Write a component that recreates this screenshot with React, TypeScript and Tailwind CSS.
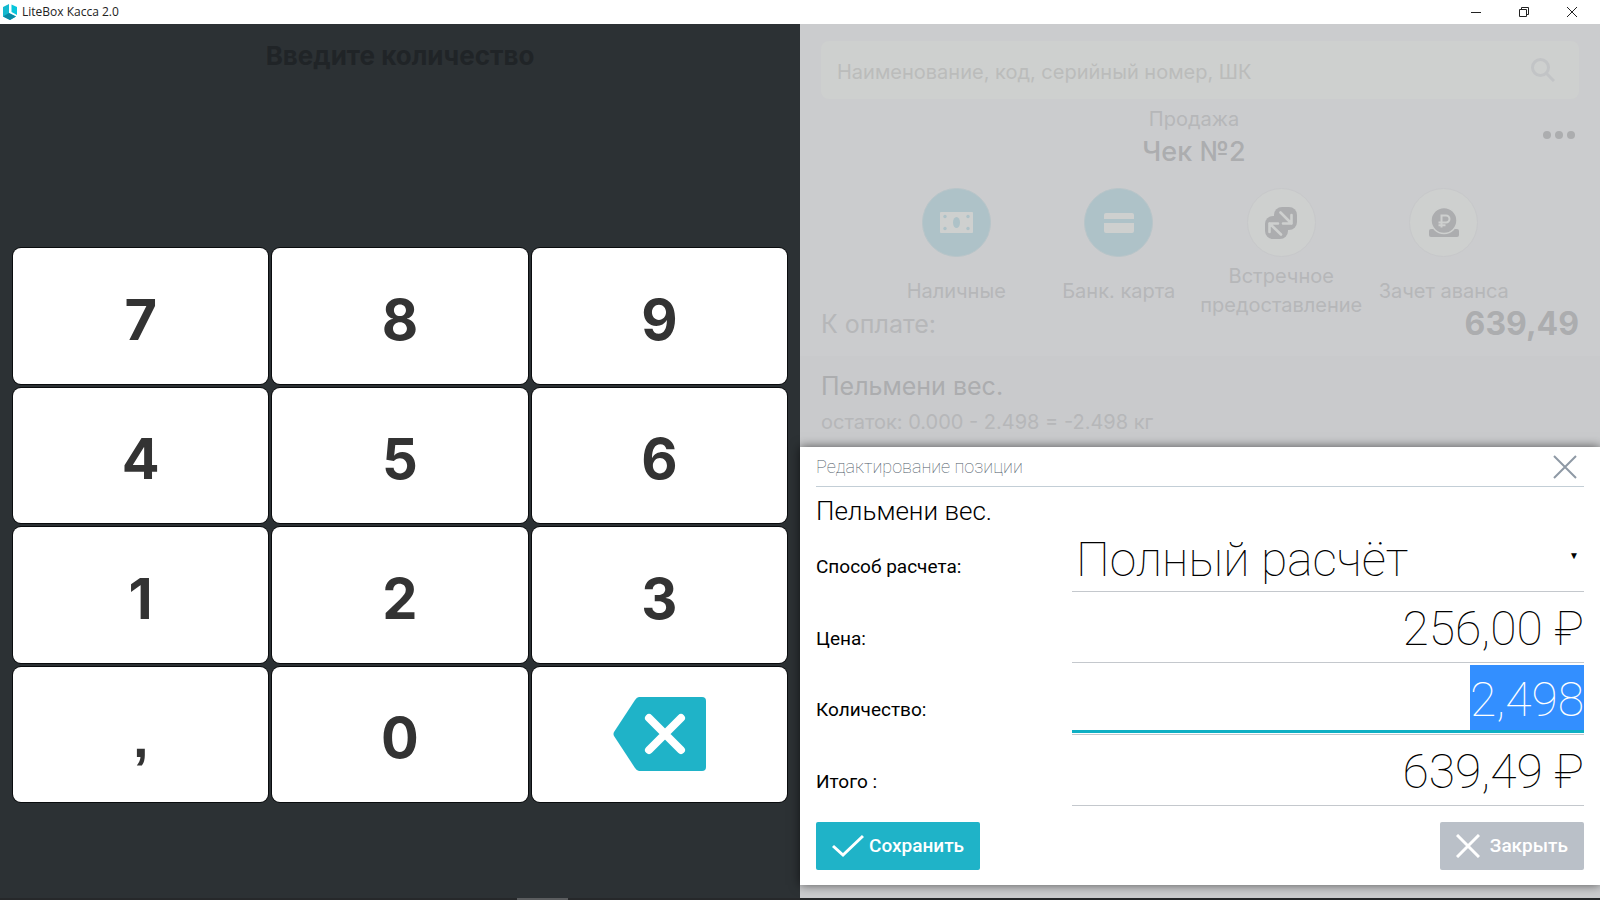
import { useState } from "react";

const keys = ["7", "8", "9", "4", "5", "6", "1", "2", "3", ",", "0", "del"];

const TitleBar = () => {
  return (
    <header className="flex h-6 shrink-0 items-center justify-between bg-white pl-[2px] font-['Open_Sans',sans-serif] text-[#222]">
      <div className="flex items-center gap-1">
        <svg className="h-[18px] w-4" viewBox="0 0 16 18">
          <path d="M1 4l6-3v9l7 3.500L8 17l-7-3.500z" fill="#14b9cf" />
          <path d="M1 13.500l6-3.500 7 3.500L8 17z" fill="#0b8aa5" />
          <path d="M9.500 1.500L15 4v8l-5.500-3z" fill="#08c6dc" />
        </svg>
        <span className="text-xs">LiteBox Касса 2.0</span>
      </div>
      <div className="flex h-full pr-1">
        <button aria-label="Свернуть" className="flex w-12 items-center justify-center">
          <svg className="h-3 w-3" viewBox="0 0 12 12" fill="none" stroke="currentColor"><path d="M1 6.500h10" /></svg>
        </button>
        <button aria-label="Развернуть" className="flex w-12 items-center justify-center">
          <svg className="h-3 w-3" viewBox="0 0 12 12" fill="none" stroke="currentColor"><path d="M1.500 3.500h7v7h-7zM3.500 3.500v-2h7v7h-2" /></svg>
        </button>
        <button aria-label="Закрыть окно" className="flex w-12 items-center justify-center">
          <svg className="h-3 w-3" viewBox="0 0 12 12" fill="none" stroke="currentColor"><path d="M1 1l10 10M11 1L1 11" /></svg>
        </button>
      </div>
    </header>
  );
};

const KeyFace = ({ value }: { value: string }) => {
  if (value === "del") {
    return (
      <svg className="mb-2 ml-[2px] h-[74px] w-[94px]" viewBox="0 0 94 74">
        <path d="M26 0h63q4 0 4 4v66q0 4-4 4H26q-2 0-4-3L1 39q-1-2 0-4L22 3q2-3 4-3z" fill="#1fb3c8" />
        <path d="M36 21l32 32M68 21L36 53" stroke="#fff" strokeWidth="8" strokeLinecap="round" />
      </svg>
    );
  }
  if (value === ",") {
    return <span className="font-['Liberation_Sans',sans-serif]">,</span>;
  }
  return <span>{value}</span>;
};

const Keypad = ({ onKey }: { onKey: (key: string) => void }) => {
  return (
    <section className="flex flex-col bg-[#2c3134] px-[13px] pb-24">
      <h1 className="pt-3 text-center text-[26px] leading-10 font-bold text-[#202427]">Введите количество</h1>
      <div className="mt-[172px] grid flex-1 grid-cols-3 grid-rows-4 gap-1">
        {keys.map((key) => (
          <button
            key={key}
            aria-label={key === "del" ? "Удалить" : key}
            onClick={() => onKey(key)}
            className="flex items-center justify-center rounded-lg bg-white pt-2 text-[56px] leading-none font-bold text-[#333] shadow-[0_0_0_1px_#0a0c0e] cursor-pointer"
          >
            <KeyFace value={key} />
          </button>
        ))}
      </div>
    </section>
  );
};

const CashIcon = () => (
  <svg className="h-[21px] w-[33px]" viewBox="0 0 33 21">
    <rect width="33" height="21" rx="1" fill="#ced0cf" />
    <g fill="#aec2c8">
      <ellipse cx="16.5" cy="10.5" rx="3.5" ry="5.5" />
      <circle cx="5" cy="4.5" r="1.7" />
      <circle cx="28" cy="4.5" r="1.7" />
      <circle cx="5" cy="16.5" r="1.7" />
      <circle cx="28" cy="16.5" r="1.7" />
    </g>
  </svg>
);

const CardIcon = () => (
  <svg className="h-[20px] w-[30px]" viewBox="0 0 30 20" fill="#ced0cf">
    <path d="M2 0h26q2 0 2 2v4H0V2q0-2 2-2zM0 10h30v8q0 2-2 2H2q-2 0-2-2z" />
  </svg>
);

const SwapIcon = () => (
  <svg className="h-8 w-8" viewBox="0 0 32 32">
    <rect x="9" y="0" width="23" height="23" rx="8" fill="#acadaf" />
    <rect x="0" y="9" width="23" height="23" rx="8" fill="#acadaf" />
    <path
      d="M15.500 5.500l11 11M26.500 8v8.500H18M16 27.500l-11.500-11M4.500 25v-8.500H13"
      fill="none"
      stroke="#ced0cf"
      strokeWidth="2.600"
      strokeLinecap="round"
      strokeLinejoin="round"
    />
  </svg>
);

const AdvanceIcon = () => (
  <svg className="h-[29px] w-[30px]" viewBox="0 0 30 29">
    <rect y="21" width="30" height="8" rx="2" fill="#acadaf" />
    <circle cx="15" cy="12.5" r="13" fill="#acadaf" stroke="#ced0cf" strokeWidth="1.5" />
    <path d="M12.500 19.500V7.500h4.500a3.500 3.500 0 0 1 0 7H9.500M9.500 17.200h7" fill="none" stroke="#ced0cf" strokeWidth="2" />
  </svg>
);

const payments = [
  { label: "Наличные", icon: <CashIcon />, filled: true },
  { label: "Банк. карта", icon: <CardIcon />, filled: true },
  { label: "Встречное предоставление", icon: <SwapIcon />, filled: false },
  { label: "Зачет аванса", icon: <AdvanceIcon />, filled: false },
];

const Receipt = () => {
  return (
    <div className="flex flex-col text-[#b6b7b9]">
      <div className="px-[21px] pt-[17px]">
        <div className="flex h-[58px] items-center rounded-lg bg-[#ced0cf] pr-6 pl-4">
          <input
            aria-label="Поиск товара"
            placeholder="Наименование, код, серийный номер, ШК"
            className="min-w-0 flex-1 bg-transparent pt-1 text-xl placeholder:text-[#bbbcbb] outline-none"
          />
          <svg className="h-6 w-6" viewBox="0 0 24 24" fill="none" stroke="#c2c4c6" strokeWidth="3">
            <circle cx="9.5" cy="9.5" r="8" />
            <path d="M15 15l8 8" />
          </svg>
        </div>
        <div className="relative pt-1 pr-3 text-center">
          <p className="text-xl leading-8">Продажа</p>
          <h2 className="text-[27px] leading-[33px] font-medium text-[#acadaf]">Чек №2</h2>
          <button aria-label="Ещё" className="absolute top-7 right-1 flex gap-1 py-1">
            <span className="size-2 rounded-full bg-[#acadaf]" />
            <span className="size-2 rounded-full bg-[#acadaf]" />
            <span className="size-2 rounded-full bg-[#acadaf]" />
          </button>
        </div>
        <div className="mx-[54px] mt-5 grid grid-cols-4">
          {payments.map((item) => (
            <button key={item.label} className="flex flex-col items-center">
              <span
                className={
                  item.filled
                    ? "flex size-[69px] items-center justify-center rounded-full border border-[#b8c5c9] bg-[#aec2c8]"
                    : "flex size-[69px] items-center justify-center rounded-full border border-[#c7c8ca] bg-[#ced0cf]"
                }
              >
                {item.icon}
              </span>
              <span className="mt-[5px] flex h-[58px] items-center text-xl leading-[29px]">{item.label}</span>
            </button>
          ))}
        </div>
        <div className="-mt-3 flex items-center justify-between">
          <span className="text-[25px] leading-8">К оплате:</span>
          <span className="text-[32px] leading-8 font-bold text-[#acadaf]">639,49</span>
        </div>
      </div>
      <div className="mt-4 flex-1 bg-[#c9cacc] px-[21px] pt-[10px] pb-3">
        <p className="text-[25px] leading-10 text-[#acadaf]">Пельмени вес.</p>
        <p className="text-xl leading-8">остаток: 0.000 - 2.498 = -2.498 кг</p>
      </div>
    </div>
  );
};

const rowClass = "grid h-[71px] grid-cols-[1fr_2fr] items-end text-[19px]";
const fieldClass =
  "h-[68px] w-full min-w-0 border-b border-[#c4c8cd] bg-transparent text-right text-5xl font-thin text-black outline-none";

const App = () => {
  const [quantity, setQuantity] = useState("2,498");

  const handleKey = (key: string) => {
    if (key === "del") {
      setQuantity(quantity.slice(0, -1));
    } else {
      setQuantity(quantity + key);
    }
  };

  return (
    <div className="flex h-screen flex-col overflow-hidden bg-[#cbccce] font-['Inter',sans-serif]">
      <TitleBar />
      <main className="grid min-h-0 flex-1 grid-cols-2">
        <Keypad onKey={handleKey} />

        <div className="flex min-h-0 flex-col">
          <div className="min-h-0 flex-1 overflow-hidden">
            <Receipt />
          </div>

          {/* position editor */}
          <form
            onSubmit={(e) => e.preventDefault()}
            className="relative mb-[13px] bg-white px-4 pb-[15px] font-['Roboto',sans-serif] text-black shadow-[0_0_10px_rgba(0,0,0,0.6)]"
          >
            <div className="flex h-10 items-center justify-between border-b border-[#c3ced6] pt-px">
              <h2 className="text-lg font-thin text-[#4d5866]">Редактирование позиции</h2>
              <button type="button" aria-label="Закрыть редактирование" className="pr-[7px]">
                <svg className="h-6 w-6" viewBox="0 0 24 24" stroke="#8e99a5" strokeWidth="2">
                  <path d="M1 1l22 22M23 1L1 23" />
                </svg>
              </button>
            </div>
            <h3 className="h-[41px] pt-1 text-[26px] leading-10 font-light">Пельмени вес.</h3>

            <div className="grid grid-cols-[1fr_2fr] text-[19px]">
              <label htmlFor="method" className="flex items-center pt-[14px]">Способ расчета:</label>
              <div className="relative h-16">
                <select id="method" className="h-full w-full appearance-none border-b border-[#c4c8cd] bg-transparent pl-1 text-5xl font-thin outline-none">
                  <option>Полный расчёт</option>
                </select>
                <span className="pointer-events-none absolute top-5 right-[5px] text-[10px]">▼</span>
              </div>
            </div>
            <div className={rowClass}>
              <label htmlFor="price" className="pb-[10px]">Цена:</label>
              <input id="price" className={fieldClass} defaultValue="256,00 ₽" />
            </div>
            <div className="grid h-18 grid-cols-[1fr_2fr] items-end text-[19px]">
              <label htmlFor="quantity" className="pb-[11px]">Количество:</label>
              <div className="h-[70px] border-b border-[#c4c8cd] pb-px">
                <div className="flex h-full w-full justify-end border-b-3 border-[#0fb0c4]">
                  <input
                    id="quantity"
                    value={quantity}
                    onChange={(e) => setQuantity(e.target.value)}
                    className="field-sizing-content h-full bg-[#338fff] pt-1 text-right text-5xl font-thin text-white outline-none"
                  />
                </div>
              </div>
            </div>
            <div className={rowClass}>
              <label htmlFor="total" className="pb-[10px]">Итого :</label>
              <input id="total" className={fieldClass} defaultValue="639,49 ₽" />
            </div>

            <div className="mt-4 flex justify-between text-[19px] font-medium text-white">
              <button type="submit" className="flex h-12 items-center gap-[5px] rounded-xs bg-[#1fb3c8] px-4">
                <svg className="h-6 w-8" viewBox="0 0 32 24" fill="none" stroke="currentColor" strokeWidth="3">
                  <path d="M1 12l10 9L31 2" />
                </svg>
                Сохранить
              </button>
              <button type="button" className="flex h-12 items-center gap-[10px] rounded-xs bg-[#bac0c8] px-4">
                <svg className="h-6 w-6" viewBox="0 0 24 24" fill="none" stroke="currentColor" strokeWidth="3">
                  <path d="M1 1l22 22M23 1L1 23" />
                </svg>
                Закрыть
              </button>
            </div>
          </form>
        </div>
      </main>
      <footer className="flex h-[2px] shrink-0 bg-[#26282a]">
        <div className="ml-[32.3%] w-[51px] bg-[#5b5d5f]" />
      </footer>
    </div>
  );
};

export default App;
